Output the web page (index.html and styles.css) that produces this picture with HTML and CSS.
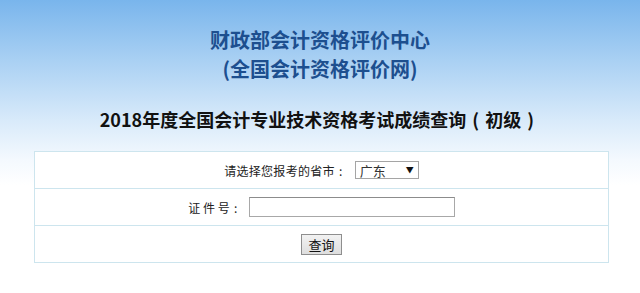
FILE: index.html
```html
<!DOCTYPE html>
<html lang="zh-CN">
<head>
<meta charset="utf-8">
<title>成绩查询</title>
<link rel="stylesheet" href="styles.css">
</head>
<body>
<div class="page">
  <header class="head">
    <div class="org">财政部会计资格评价中心</div>
    <div class="org">(全国会计资格评价网)</div>
    <h1 class="title">2018年度全国会计专业技术资格考试成绩查询<span class="par">(</span>初级<span class="par">)</span></h1>
  </header>
  <form class="query">
    <div class="row">
      <label class="lbl">请选择您报考的省市<span class="colon">:</span></label>
      <span class="select"><span class="sel-text">广东</span><span class="sel-arrow">▼</span></span>
    </div>
    <div class="row">
      <label class="lbl">证 件 号<span class="colon">:</span></label>
      <span class="input"></span>
    </div>
    <div class="row">
      <span class="btn">查询</span>
    </div>
  </form>
</div>
</body>
</html>
```

FILE: styles.css
```css
html, body {
  margin: 0;
  padding: 0;
}
body {
  width: 640px;
  height: 293px;
  overflow: hidden;
  background: linear-gradient(to bottom, #79b5ec 0px, #a9d0f3 60px, #d8eafa 120px, #f4f9fe 160px, #ffffff 185px);
  font-family: "Noto Sans CJK SC", "Microsoft YaHei", sans-serif;
}
.page {
  padding-top: 25px;
}
.head {
  text-align: center;
}
.org {
  font-size: 20px;
  line-height: 29px;
  font-weight: bold;
  color: #1d4f8f;
}
.title {
  margin: 24px 0 0;
  font-size: 18px;
  line-height: 24px;
  font-weight: bold;
  color: #111;
  letter-spacing: 0;
}
.par {
  display: inline-block;
  width: 19px;
  text-align: center;
}
.query {
  margin: 20px 0 0 34px;
  width: 573px;
  border: 1px solid #cde5ee;
  background: #fff;
}
.row {
  height: 36px;
  display: flex;
  align-items: center;
  justify-content: center;
  border-top: 1px solid #cde5ee;
  font-size: 12px;
  color: #222;
}
.row:first-child {
  border-top: 0;
}
.lbl {
  margin-right: 6px;
}
.row:first-child .lbl {
  letter-spacing: 0.3px;
  margin-right: 8px;
}
.colon {
  display: inline-block;
  width: 12px;
  text-align: center;
}
.select {
  height: 16px;
  border: 1px solid #a5a5a5;
  display: flex;
  align-items: center;
  justify-content: space-between;
  padding: 0 4px 0 4px;
  width: 54px;
  background: #fff;
  font-size: 13px;
  color: #333;
}
.sel-arrow {
  font-size: 8px;
  color: #111;
  align-self: flex-start;
  margin-top: 2px;
}
.input {
  width: 204px;
  height: 18px;
  border: 1px solid #a8a8a8;
  border-top-color: #8c8c8c;
  background: #fff;
  margin-left: 1px;
}
.btn {
  width: 39px;
  height: 19px;
  border: 1px solid #8e8e8e;
  background: linear-gradient(to bottom, #f2f2f2, #dedede);
  display: flex;
  align-items: center;
  justify-content: center;
  font-size: 13px;
  color: #111;
}
```
